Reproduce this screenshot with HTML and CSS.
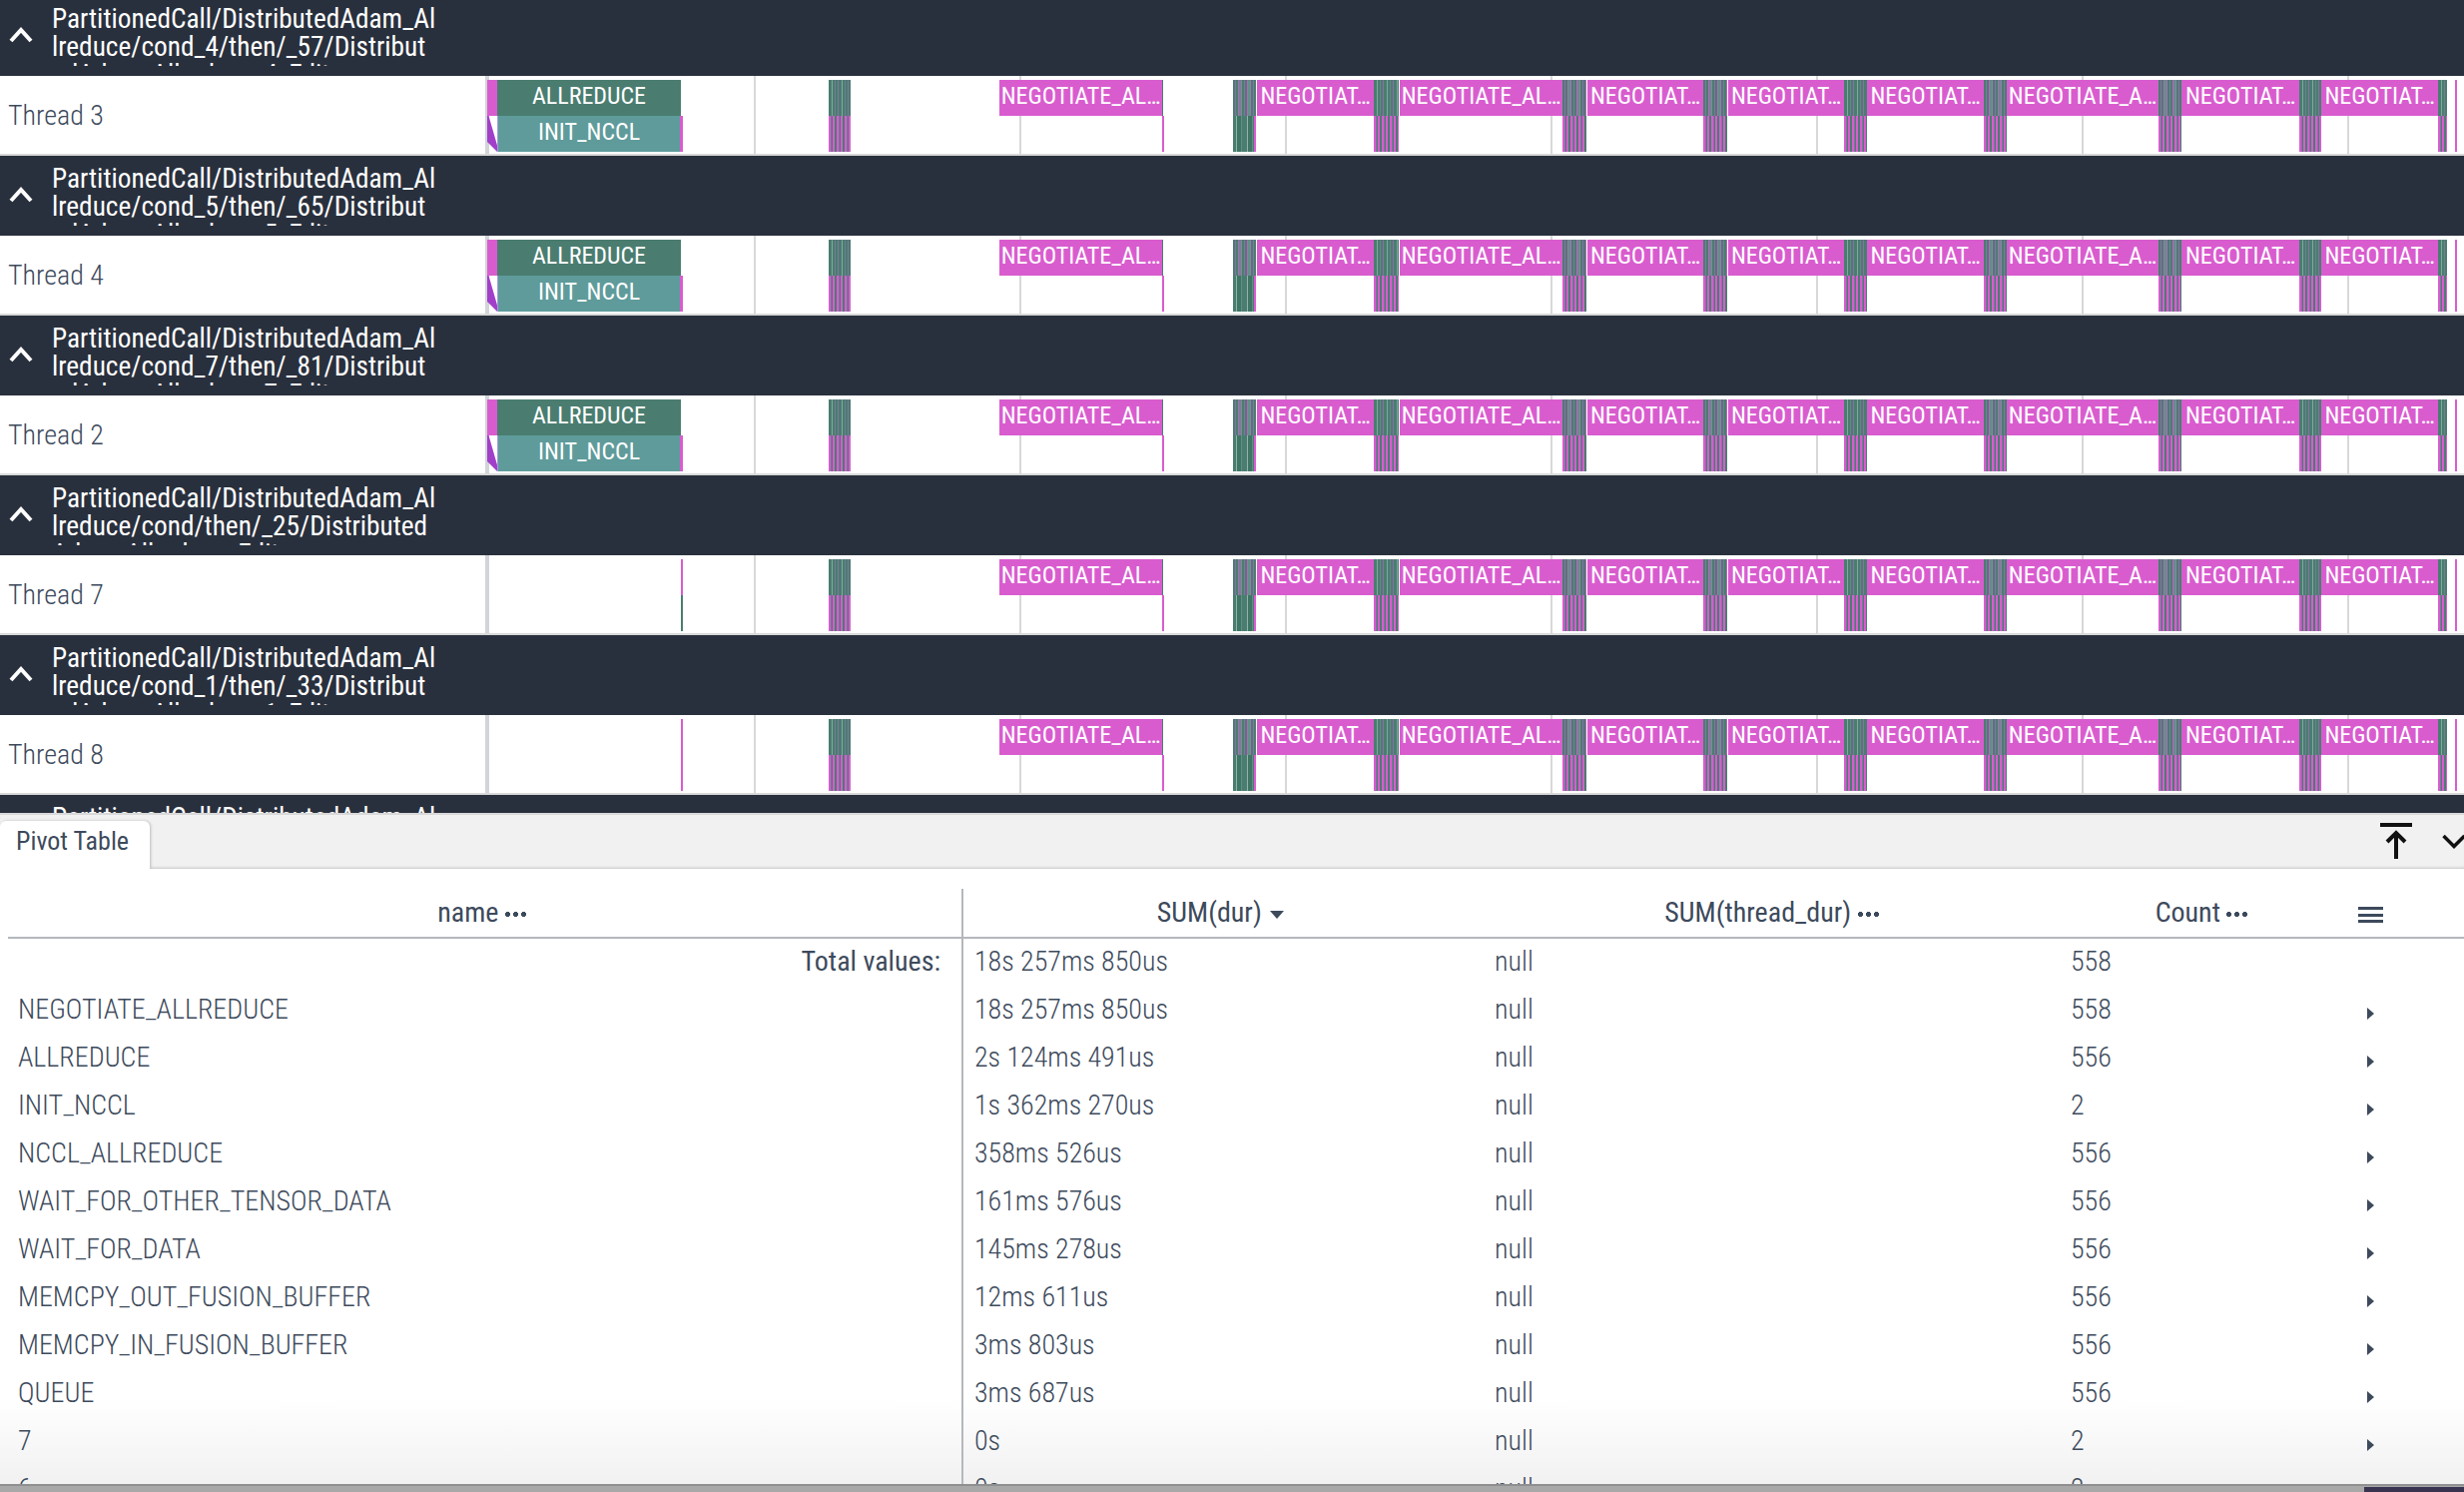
FILE: index.html
```html
<!DOCTYPE html>
<html lang="en">
<head>
  <meta charset="UTF-8" />
  <title>Pivot Table</title>
  <link rel="stylesheet" href="styles.css">
</head>
<body>
  <div id="timeline" class="timeline"></div>

  <div class="tabbar">
    <div class="tab">Pivot Table</div>
    <div class="tab-icons">
      <svg class="icon-top" width="32" height="36" viewBox="0 0 32 36"><path d="M0 2h32M16 36V10M7 19l9-9 9 9" fill="none" stroke="#111" stroke-width="4"/></svg>
      <svg class="icon-down" width="24" height="15" viewBox="0 0 24 15"><path d="M1.500 2l10.500 10.500L22.500 2" fill="none" stroke="#111" stroke-width="3.500"/></svg>
    </div>
  </div>

  <div class="table">
    <div class="row head">
      <div class="cell name shift">name <span class="dots"></span></div>
      <div class="cell shift">SUM(dur) <span class="sort"></span></div>
      <div class="cell">SUM(thread_dur) <span class="dots"></span></div>
      <div class="cell shift">Count <span class="dots"></span></div>
      <div class="cell more"><span class="burger"></span></div>
    </div>
    <div id="rows"></div>
  </div>
  <div class="bottom"><div class="bottom-end"></div></div>

  <script src="script.js"></script>
</body>
</html>
```

FILE: styles.css
```css
* {
  box-sizing: border-box;
}
html, body {
  margin: 0;
  height: 1494px;
  overflow: hidden;
}
body {
  font-family: Roboto, sans-serif;
  font-stretch: 75%;
  color: #3d4a5c;
  background: #fff;
  display: flex;
  flex-direction: column;
}

/* timeline */
.timeline {
  height: 820px;
  margin-top: -4px;
  overflow: hidden;
  flex: none;
  border-bottom: 2px solid #d9d9d9;
}
.group {
  height: 80px;
  background: #29303d;
  color: #fff;
  display: flex;
  overflow: hidden;
}
.chevron {
  width: 52px;
  flex: none;
  padding: 30px 0 0 8px;
}
.group-title {
  width: 400px;
  height: 66px;
  margin-top: 4px;
  overflow: hidden;
  font-size: 27.300px;
  line-height: 28px;
  padding-top: 5px;
  white-space: nowrap;
}
.thread {
  height: 80px;
  display: flex;
  background: #fff;
  border-bottom: 2px solid #d9d9d9;
}
.thread-name {
  width: 486px;
  flex: none;
  font-size: 28px;
  font-weight: 300;
  padding: 23px 0 0 8px;
}
.lane {
  position: relative;
  flex: 1;
  border-left: 4px solid #d2d4da;
}
.grid {
  position: absolute;
  top: 0;
  bottom: -2px;
  width: 2px;
  background: #d8d8d8;
}
.slice {
  position: absolute;
  height: 36px;
  color: #fff;
  font-size: 24px;
  line-height: 32px;
  text-align: center;
  white-space: nowrap;
  overflow: hidden;
}
.lo {
  top: 40px;
}
.hi {
  top: 4px;
}
.pink {
  background: #d95ccf;
}
.dark {
  background: #4a7d70;
}
.teal {
  background: #5f9b9b;
  border-left: 1px solid #9c9fe0;
}
.top-mixed {
  background: repeating-linear-gradient(90deg, #4a7d70 0 2px, #8a6fa8 2px 3px, #4a7d70 3px 5px, #c060c0 5px 6px, #5f9088 6px 8px, #9a78b0 8px 9px);
}
.top-green {
  background: repeating-linear-gradient(90deg, #4a7d70 0 3px, #7fa8a0 3px 4px, #4a7d70 4px 6px, #6e7f90 6px 7px, #4a7d70 7px 9px, #8a6fa8 9px 10px);
}
.low-pink {
  background: repeating-linear-gradient(90deg, #d95ccf 0 2px, #8a6fa8 2px 3px, #4a7d70 3px 4px, #d95ccf 4px 6px, #4a7d70 6px 8px);
}
.low-green {
  background: repeating-linear-gradient(90deg, #4a7d70 0 3px, #8fb5ab 3px 4px, #3f7565 4px 8px, #5f9088 8px 9px, #4a7d70 9px 11px);
  border-right: 2px solid #d95ccf;
}
.tri {
  background: #a23fc9;
  clip-path: polygon(0 0, 15% 0, 100% 82%, 100% 100%, 0 72%);
}

/* bottom panel */
.tabbar {
  height: 54px;
  flex: none;
  background: #f1f1f1;
  display: flex;
  justify-content: space-between;
  box-shadow: inset 0 -3px 3px -2px #c4c4c4;
}
.tab {
  width: 150px;
  height: 48px;
  margin-top: 6px;
  background: #fff;
  border-radius: 6px 6px 0 0;
  font-size: 26px;
  line-height: 41px;
  padding-left: 16px;
  box-shadow: 1px 0 3px #bbb;
}
.tab-icons {
  display: flex;
  width: 84px;
  gap: 30px;
  padding-top: 8px;
  flex: none;
}
.icon-top, .icon-down {
  flex: none;
}
.icon-down {
  margin-top: 11px;
}

.table {
  flex: 1;
  overflow: hidden;
  padding-left: 8px;
  background: linear-gradient(#fff 530px, #f1f1f1);
}
.row {
  display: grid;
  grid-template-columns: 957px 521px 577px 290px 1fr;
  height: 48px;
  font-size: 28px;
  font-weight: 300;
  line-height: 45px;
}
.row.head {
  height: 70px;
  padding-top: 20px;
  font-weight: 400;
  line-height: 47px;
  border-bottom: 2px solid #b4b8bc;
}
.cell {
  white-space: nowrap;
  padding-left: 11px;
}
.cell.name {
  border-right: 2px solid #b4b8bc;
  padding-left: 10px;
}
.head .cell {
  text-align: center;
  padding-left: 0;
}
.head .shift {
  padding-right: 6px;
}
.row .total {
  text-align: right;
  padding-right: 21px;
  font-weight: 400;
}
.dots {
  display: inline-block;
  width: 21px;
  height: 5px;
  vertical-align: middle;
  background: radial-gradient(circle at 2.500px 2.500px, #3d4a5c 2.300px, transparent 2.800px) 0 0 / 8px 5px repeat-x;
}
.sort {
  display: inline-block;
  border: 7px solid transparent;
  border-top: 8px solid #3d4a5c;
  border-bottom: 0;
  vertical-align: middle;
  margin-left: 2px;
}
.head .more {
  text-align: left;
  padding-left: 9px;
}
.burger {
  display: block;
  width: 25px;
  height: 16px;
  margin-top: 18px;
  border-top: 3px solid #3d4a5c;
  border-bottom: 3px solid #3d4a5c;
  background: linear-gradient(#3d4a5c, #3d4a5c) 0 3.500px / 100% 3px no-repeat;
}
.arrow {
  display: inline-block;
  margin-left: 7px;
  border: 6px solid transparent;
  border-left: 7px solid #3d4a5c;
  border-right: 0;
  vertical-align: -1px;
}
.bottom {
  height: 8px;
  flex: none;
  background: linear-gradient(#8f8f8f 0 2px, #a8a8a8 2px);
  display: flex;
  justify-content: flex-end;
}
.bottom-end {
  width: 100px;
  margin-top: 3px;
  background: #3a3350;
}
```

FILE: script.js
```js
const groups = [
  { title: ["PartitionedCall/DistributedAdam_Al", "lreduce/cond_4/then/_57/Distribut", "edAdam_Allreduce_4_Edit"], thread: "Thread 3", lead: true },
  { title: ["PartitionedCall/DistributedAdam_Al", "lreduce/cond_5/then/_65/Distribut", "edAdam_Allreduce_5_Edit"], thread: "Thread 4", lead: true },
  { title: ["PartitionedCall/DistributedAdam_Al", "lreduce/cond_7/then/_81/Distribut", "edAdam_Allreduce_7_Edit"], thread: "Thread 2", lead: true },
  { title: ["PartitionedCall/DistributedAdam_Al", "lreduce/cond/then/_25/Distributed", "Adam_Allreduce_Edit"], thread: "Thread 7", lead: false },
  { title: ["PartitionedCall/DistributedAdam_Al", "lreduce/cond_1/then/_33/Distribut", "edAdam_Allreduce_1_Edit"], thread: "Thread 8", lead: false },
];

const chevron = '<svg width="26" height="18" viewBox="0 0 26 18"><path d="M3 15L13 4l10 11" fill="none" stroke="#fff" stroke-width="4"/></svg>';

const gridLines = [755, 1021, 1287, 1553, 1819, 2085, 2351];
const negotiate = [
  [1001, 1164, "NEGOTIATE_AL…"],
  [1259, 1376, "NEGOTIAT…"],
  [1402, 1565, "NEGOTIATE_AL…"],
  [1590, 1706, "NEGOTIAT…"],
  [1731, 1847, "NEGOTIAT…"],
  [1870, 1987, "NEGOTIAT…"],
  [2010, 2162, "NEGOTIATE_A…"],
  [2185, 2303, "NEGOTIAT…"],
  [2325, 2442, "NEGOTIAT…"],
];
// [start, end, top row stripes, lower row stripes]
const bursts = [
  [830, 852, "top-green", "low-pink"],
  [1235, 1258, "top-mixed", "low-green"],
  [1376, 1401, "top-green", "low-pink"],
  [1565, 1589, "top-mixed", "low-pink"],
  [1706, 1730, "top-mixed", "low-pink"],
  [1847, 1870, "top-green", "low-pink"],
  [1987, 2010, "top-mixed", "low-pink"],
  [2162, 2185, "top-mixed", "low-pink"],
  [2303, 2325, "top-green", "low-pink"],
  [2442, 2451, "top-green", "low-pink"],
];

// x in page pixels, the lane starts after the 486px name column and its 4px line
function slice(cls, x1, x2, text) {
  const left = x1 - 490;
  return `<div class="slice ${cls}" style="left:${left}px;width:${x2 - x1}px">${text || ""}</div>`;
}

function renderGroup(g) {
  let lane = gridLines.map(x => `<div class="grid" style="left:${x - 490}px"></div>`).join("");
  if (g.lead) {
    lane += slice("hi pink", 488, 498);
    lane += slice("hi dark", 498, 682, "ALLREDUCE");
    lane += slice("lo tri", 488, 498);
    lane += slice("lo teal", 498, 681, "INIT_NCCL");
    lane += slice("lo pink", 681, 684);
  } else {
    lane += slice("hi pink", 682, 684);
    lane += slice(g.thread === "Thread 7" ? "lo dark" : "lo pink", 682, 684);
  }
  negotiate.forEach(n => { lane += slice("hi pink", n[0], n[1], n[2]); });
  lane += slice("lo pink", 1164, 1166);
  lane += slice("hi dark", 1164, 1165);
  bursts.forEach(b => {
    lane += slice("hi " + b[2], b[0], b[1]);
    lane += slice("lo " + b[3], b[0], b[1]);
  });
  lane += slice("hi pink", 2459, 2461);
  lane += slice("lo pink", 2459, 2461);

  return `<div class="group"><div class="chevron">${chevron}</div><div class="group-title">${g.title.join("<br>")}</div></div>
    <div class="thread"><div class="thread-name">${g.thread}</div><div class="lane">${lane}</div></div>`;
}

const trailing = '<div class="group"><div class="chevron">' + chevron + '</div><div class="group-title">PartitionedCall/DistributedAdam_Al</div></div>';
document.getElementById("timeline").innerHTML = groups.map(renderGroup).join("") + trailing;

const data = [
  ["NEGOTIATE_ALLREDUCE", "18s 257ms 850us", "558"],
  ["ALLREDUCE", "2s 124ms 491us", "556"],
  ["INIT_NCCL", "1s 362ms 270us", "2"],
  ["NCCL_ALLREDUCE", "358ms 526us", "556"],
  ["WAIT_FOR_OTHER_TENSOR_DATA", "161ms 576us", "556"],
  ["WAIT_FOR_DATA", "145ms 278us", "556"],
  ["MEMCPY_OUT_FUSION_BUFFER", "12ms 611us", "556"],
  ["MEMCPY_IN_FUSION_BUFFER", "3ms 803us", "556"],
  ["QUEUE", "3ms 687us", "556"],
  ["7", "0s", "2"],
  ["6", "0s", "2"],
];

let html = `<div class="row"><div class="cell name total">Total values:</div><div class="cell">18s 257ms 850us</div><div class="cell">null</div><div class="cell">558</div><div class="cell"></div></div>`;
data.forEach(d => {
  html += `<div class="row"><div class="cell name">${d[0]}</div><div class="cell">${d[1]}</div><div class="cell">null</div><div class="cell">${d[2]}</div><div class="cell"><span class="arrow"></span></div></div>`;
});
document.getElementById("rows").innerHTML = html;
```
